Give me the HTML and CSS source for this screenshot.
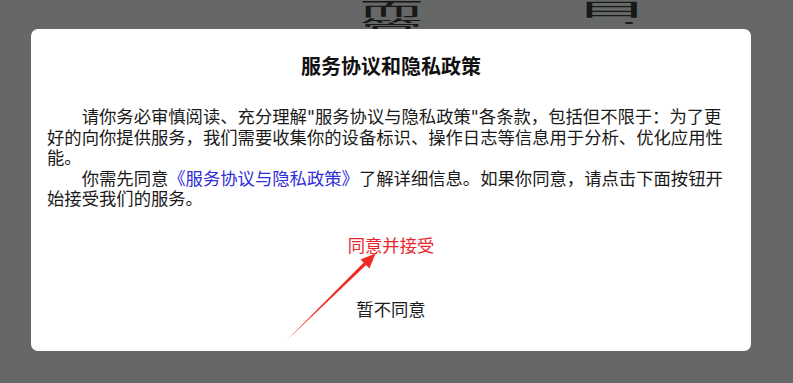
FILE: index.html
```html
<!DOCTYPE html>
<html lang="zh-CN">
<head>
<meta charset="utf-8">
<title>服务协议和隐私政策</title>
<link rel="stylesheet" href="styles.css">
</head>
<body>
<div class="screen">
  <div class="page-content">
    <div class="bg-col c1"><span>而</span><span>管</span></div>
    <div class="bg-col c2"><span>目</span><span class="colon">:</span></div>
  </div>
  <div class="overlay">
    <div class="dialog">
      <h1 class="title">服务协议和隐私政策</h1>
      <p class="para">请你务必审慎阅读、充分理解<span class="q">"</span>服务协议与隐私政策<span class="q">"</span>各条款，包括但不限于：为了更好的向你提供服务，我们需要收集你的设备标识、操作日志等信息用于分析、优化应用性能。</p>
      <p class="para second">你需先同意<a class="link" href="#">《服务协议与隐私政策》</a>了解详细信息。如果你同意，请点击下面按钮开始接受我们的服务。</p>
      <div class="actions">
        <button class="btn accept">同意并接受</button>
        <button class="btn decline">暂不同意</button>
      </div>
    </div>
    <svg class="arrow" width="793" height="383" viewBox="0 0 793 383">
      <polygon points="286,341 366.1,264.9 363.8,262.6" fill="#ee2a22"/>
      <polygon points="375.5,253.5 369.4,268.4 360.5,259.4" fill="#ee2a22"/>
    </svg>
  </div>
</div>
</body>
</html>
```

FILE: styles.css
```css
* { box-sizing: border-box; }
html, body { margin: 0; padding: 0; }
body {
  font-family: Roboto, "Noto Sans CJK SC", sans-serif;
  background: #fdffff;
}
.screen {
  position: relative;
  width: 793px;
  height: 383px;
  overflow: hidden;
  background: #fdffff;
}
.page-content {
  display: flex;
  margin-top: -1px;
  padding-left: 359px;
  gap: 198px;
  color: #3a3c3c;
  font-family: "Noto Sans CJK SC", sans-serif;
  font-size: 18px;
  line-height: 18px;
}
.bg-col {
  display: flex;
  flex-direction: column;
  width: 18px;
  transform-origin: left top;
}
.c1 { transform: scaleX(3.6); }
.c2 { transform: scaleX(4.1); }
.c2 .colon {
  font-family: Roboto, sans-serif;
  padding-left: 11px;
}
.overlay {
  position: absolute;
  inset: 0;
  background: rgba(0, 0, 0, 0.597);
  padding: 29px 0 0 31px;
}
.dialog {
  width: 720px;
  height: 322px;
  background: #fff;
  border-radius: 7px;
  padding: 24px 16px 0;
  color: #1a1a1a;
}
.title {
  margin: 0;
  text-align: center;
  font-size: 20px;
  font-weight: 700;
  line-height: 29px;
  color: #111;
}
.para {
  margin: 25px 0 0;
  font-size: 17.33px;
  line-height: 20.5px;
  text-indent: 2em;
  color: #1a1a1a;
}
.para.second {
  margin-top: 0;
}
.q {
  font-family: "DejaVu Sans", sans-serif;
}
.link {
  color: #2f2ed8;
  text-decoration: none;
}
.actions {
  display: flex;
  flex-direction: column;
  align-items: center;
  gap: 19px;
  margin-top: 14px;
}
.btn {
  border: 0;
  background: transparent;
  font-family: Roboto, "Noto Sans CJK SC", sans-serif;
  font-size: 17.33px;
  line-height: 25px;
  padding: 10px 24px;
  cursor: pointer;
}
.accept { color: #e8262b; }
.decline { color: #1c1c1c; }
.arrow {
  position: absolute;
  left: 0;
  top: 0;
  pointer-events: none;
}
```
